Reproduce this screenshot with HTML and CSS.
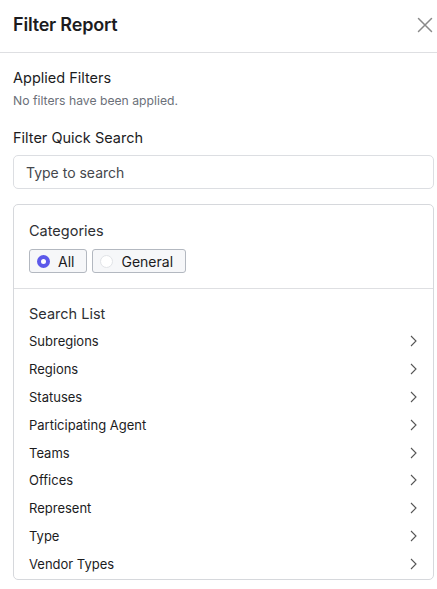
FILE: index.html
```html
<!DOCTYPE html>
<html lang="en">

<head>
    <meta charset="UTF-8">
    <meta name="viewport" content="width=device-width, initial-scale=1.0">
    <title>Filter Report</title>

    <link rel="stylesheet" href="styles.css">

</head>

<body>
    <header class="drawerHead">
        <h1>Filter Report</h1>
        <button class="closeBtn" aria-label="Close">
            <svg width="16" height="16" viewBox="0 0 16 16">
                <path d="M1.5 1.5 L14.5 14.5 M14.5 1.5 L1.5 14.5" stroke="#8a8a8a" stroke-width="1.5" fill="none"
                    stroke-linecap="round" />
            </svg>
        </button>
    </header>

    <main class="drawerBody">
        <section class="applied">
            <h3>Applied Filters</h3>
            <p class="muted">No filters have been applied.</p>
        </section>

        <section class="quick">
            <h3>Filter Quick Search</h3>
            <input type="text" class="searchInput" placeholder="Type to search">
        </section>

        <div class="card">
            <div class="cardSection">
                <h4>Categories</h4>
                <div class="chips">
                    <label class="chip">
                        <span class="radio checked"></span>
                        All
                    </label>
                    <label class="chip">
                        <span class="radio"></span>
                        General
                    </label>
                </div>
            </div>

            <div class="cardSection listSection">
                <h4>Search List</h4>
                <ul class="searchList">
                    <li>Subregions <svg class="chev" viewBox="0 0 7 12"><path d="M1 1 L6 6 L1 11" /></svg></li>
                    <li>Regions <svg class="chev" viewBox="0 0 7 12"><path d="M1 1 L6 6 L1 11" /></svg></li>
                    <li>Statuses <svg class="chev" viewBox="0 0 7 12"><path d="M1 1 L6 6 L1 11" /></svg></li>
                    <li>Participating Agent <svg class="chev" viewBox="0 0 7 12"><path d="M1 1 L6 6 L1 11" /></svg></li>
                    <li>Teams <svg class="chev" viewBox="0 0 7 12"><path d="M1 1 L6 6 L1 11" /></svg></li>
                    <li>Offices <svg class="chev" viewBox="0 0 7 12"><path d="M1 1 L6 6 L1 11" /></svg></li>
                    <li>Represent <svg class="chev" viewBox="0 0 7 12"><path d="M1 1 L6 6 L1 11" /></svg></li>
                    <li>Type <svg class="chev" viewBox="0 0 7 12"><path d="M1 1 L6 6 L1 11" /></svg></li>
                    <li>Vendor Types <svg class="chev" viewBox="0 0 7 12"><path d="M1 1 L6 6 L1 11" /></svg></li>
                </ul>
            </div>
        </div>
    </main>

</body>

</html>
```

FILE: styles.css
```css
* {
    font-family: 'Inter', 'Noto Sans', Arial, sans-serif;
    padding: 0px;
    box-sizing: border-box;
    margin: 0px;
}

body {
    width: 437px;
    background-color: #fff;
    color: #1c1c1e;
}

.drawerHead {
    display: flex;
    justify-content: space-between;
    align-items: center;
    height: 53px;
    padding: 0 2px 0 13px;
    border-bottom: 1px solid #dedfe2;
}

.drawerHead h1 {
    font-size: 18px;
    font-weight: 600;
    letter-spacing: -0.2px;
    margin-top: -4px;
}

.closeBtn {
    border: none;
    background: none;
    width: 20px;
    height: 24px;
    display: flex;
    align-items: center;
    justify-content: center;
    margin-top: -2px;
}

.drawerBody {
    padding: 15px 3px 0 13px;
}

h3 {
    font-size: 14.5px;
    font-weight: 400;
    line-height: 20px;
}

.muted {
    font-size: 12.2px;
    line-height: 16px;
    color: #6b7079;
    margin-top: 5px;
}

.quick {
    margin-top: 19px;
}

.searchInput {
    display: block;
    width: 100%;
    height: 34px;
    margin-top: 7px;
    padding: 0 12px;
    border: 1px solid #dcdee2;
    border-radius: 5px;
    font-size: 14px;
    outline: none;
}

.searchInput::placeholder {
    color: #45474c;
}

.card {
    margin-top: 15px;
    border: 1px solid #d6d8dc;
    border-radius: 5px;
}

.cardSection {
    padding: 16px 15px 15px 15px;
}

.cardSection h4 {
    font-size: 14.5px;
    font-weight: 400;
    line-height: 20px;
    color: #2e2f33;
}

.chips {
    display: flex;
    gap: 5px;
    margin-top: 8px;
}

.chip {
    display: flex;
    align-items: center;
    gap: 8px;
    height: 24px;
    padding: 0 12px 0 7px;
    border: 1px solid #b3b8c0;
    border-radius: 3px;
    background-color: #f6f7f9;
    font-size: 14px;
    color: #1c1c1e;
}

.radio {
    width: 13px;
    height: 13px;
    border-radius: 50%;
    border: 1px solid #e1e3e7;
    background-color: #fff;
}

.radio.checked {
    border: 4px solid #5c59ea;
}

.listSection {
    border-top: 1px solid #dedfe2;
    padding: 15px 0 1px 15px;
}

.searchList {
    list-style: none;
    margin-top: 3px;
}

.searchList li {
    display: flex;
    justify-content: space-between;
    align-items: center;
    height: 27.9px;
    padding-right: 16px;
    font-size: 13px;
    color: #1c1c1e;
}

.chev {
    width: 7px;
    height: 12px;
    fill: none;
    stroke: #555;
    stroke-width: 1.1;
}
```
